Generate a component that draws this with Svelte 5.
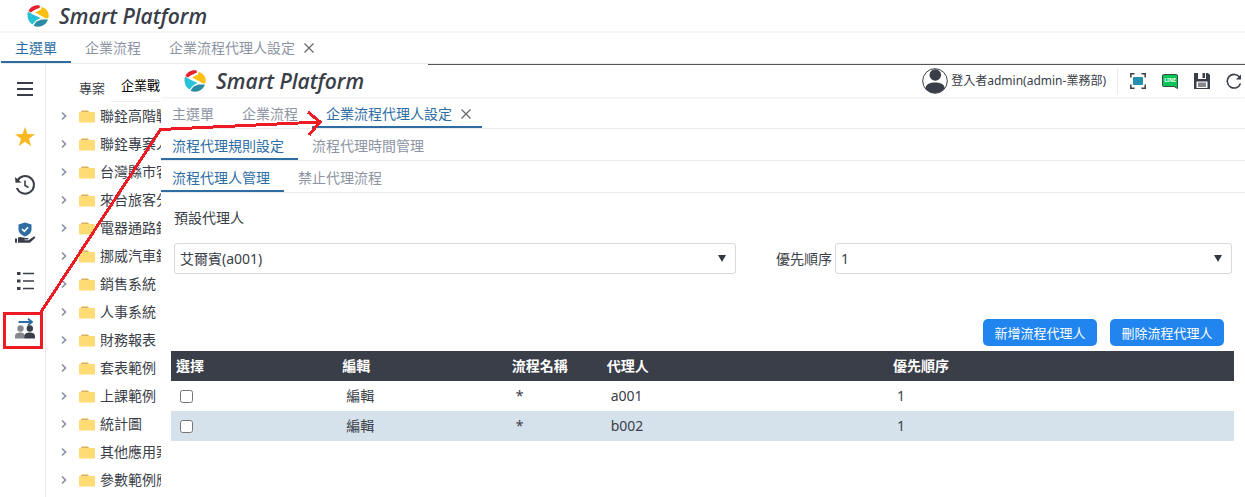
<script lang="ts">
	const tabs = ['主選單', '企業流程', '企業流程代理人設定'];
	const ruleTabs = ['流程代理規則設定', '流程代理時間管理'];
	const agentTabs = ['流程代理人管理', '禁止代理流程'];
	const folders = [
		'聯銓高階戰',
		'聯銓專案人',
		'台灣縣市客',
		'來台旅客分',
		'電器通路銷',
		'挪威汽車銷',
		'銷售系統',
		'人事系統',
		'財務報表',
		'套表範例',
		'上課範例',
		'統計圖',
		'其他應用案',
		'參數範例應'
	];

	let rows = $state([
		{ checked: false, flow: '*', agent: 'a001', order: 1 },
		{ checked: false, flow: '*', agent: 'b002', order: 1 }
	]);
	let agent = $state('a001');
	let order = $state('1');
	let mainTab = $state(0);
	let panelTab = $state(2);
	let ruleTab = $state(0);
	let agentTab = $state(0);

	function addAgent() {
		rows.push({ checked: false, flow: '*', agent, order: Number(order) });
	}

	function removeAgents() {
		rows = rows.filter((r) => !r.checked);
	}
</script>

{#snippet brand()}
	<div class="brand">
		<svg width="22" height="22" viewBox="0 0 22 22">
			<path d="M1.5 6 C3 2 8 -0.5 12.5 0.5 L13 2.5 L6.5 5.5 L4 7.5 Z" fill="#e8202c" />
			<path d="M14.5 2 C20 3 22.5 8 21.5 13 L19 13.5 L12 9.5 L8 7.5 L14 4.5 Z" fill="#fdc010" />
			<path d="M1 6.5 L6 9.500 L13.500 13 L9 15.500 L5.500 19.500 C1 17 -0.500 11 1 6.500 Z" fill="#27c2d8" />
			<path d="M6.5 20.5 L9.5 16.5 L14.5 14.5 L21 14.5 C19 20.5 12 23.5 6.5 20.5 Z" fill="#2a8ba5" />
		</svg>
		<span>Smart Platform</span>
	</div>
{/snippet}

{#snippet tabBar(items: string[], active: number, select: (i: number) => void, closable: boolean)}
	<nav class="tabs">
		{#each items as item, i}
			<button class="tab" class:active={i === active} onclick={() => select(i)}>
				{item}
				{#if closable && i === items.length - 1}
					<svg width="12" height="12" viewBox="0 0 12 12">
						<path d="M1.5 1.5 L10.5 10.5 M10.5 1.5 L1.5 10.5" stroke="#666" stroke-width="1.2" />
					</svg>
				{/if}
			</button>
		{/each}
	</nav>
{/snippet}

<div class="page">
	<header class="bar">{@render brand()}</header>
	<div class="main-tabs">
		{@render tabBar(tabs, mainTab, (i) => (mainTab = i), true)}
	</div>

	<div class="body">
		<aside class="side">
			<button aria-label="選單">
				<svg width="22" height="22" viewBox="0 0 22 22">
					<path d="M3 5 H19 M3 11 H19 M3 17 H19" stroke="#3a3e48" stroke-width="2" />
				</svg>
			</button>
			<button aria-label="最愛">
				<svg width="22" height="22" viewBox="0 0 22 22">
					<path
						d="M11 1 L13.5 8 L21 8.2 L15 12.8 L17.2 20.2 L11 15.8 L4.8 20.2 L7 12.8 L1 8.2 L8.5 8 Z"
						fill="#f8b820"
					/>
				</svg>
			</button>
			<button aria-label="歷史">
				<svg width="22" height="22" viewBox="0 0 22 22" fill="none" stroke="#3a3e48" stroke-width="2">
					<path d="M3.2 7 A8.8 8.8 0 1 1 2.9 14" />
					<path d="M11 6.5 V11.5 L14.5 13.5" stroke-width="1.6" />
					<path d="M1 3 L1.5 8.8 L7.5 8.6 Z" fill="#3a3e48" stroke="none" />
				</svg>
			</button>
			<button aria-label="權限">
				<svg width="22" height="22" viewBox="0 0 22 22">
					<path d="M11 0.5 L17.5 2.5 V7 C17.5 11 14.5 13 11 14.5 C7.5 13 4.5 11 4.5 7 V2.5 Z" fill="#2e6da4" />
					<path d="M8 7 L10.3 9.3 L14 5.2" fill="none" stroke="#fff" stroke-width="1.6" />
					<path
						d="M4 15.5 C7 14 8.5 16 14 16 C15 16.5 14.5 17.5 13.5 17.5 H10.5 V18.2 H14.5 L19.5 14.7 C21 14 21.8 15.2 21 16 L16 20.8 H4 Z"
						fill="#3a3e48"
					/>
					<path d="M1 16.5 H3 V20.8 H1 Z" fill="#3a3e48" />
				</svg>
			</button>
			<button aria-label="清單">
				<svg width="22" height="22" viewBox="0 0 22 22">
					<path d="M3 2 H6.5 V5 H3 Z M3 9.5 H6.5 V12.5 H3 Z M3 17 H6.5 V20 H3 Z" fill="#3a3e48" />
					<path d="M9 3.5 H20 M9 11 H20 M9 18.5 H20" stroke="#3a3e48" stroke-width="1.6" />
				</svg>
			</button>
			<button aria-label="代理人設定">
				<svg width="22" height="22" viewBox="0 0 22 22">
					<path d="M4.5 4 H18 M14 0.8 L18 4 L14 7.2" fill="none" stroke="#2e6da4" stroke-width="1.8" />
					<circle cx="6.5" cy="10.5" r="3.2" fill="#85888e" />
					<path d="M1 20.5 V18 C1 15.5 3.5 14.5 6.5 14.5 C9 14.5 11 16 11 18 V20.5 Z" fill="#85888e" />
					<circle cx="15.8" cy="10.5" r="3.2" fill="#3a3e48" />
					<path d="M10.5 20.5 V18 C10.5 15.5 13 14.5 16 14.5 C19 14.5 21 16 21 18 V20.5 Z" fill="#3a3e48" />
				</svg>
			</button>
		</aside>

		<section class="tree">
			<div class="tree-head">
				<span>專案</span>
				<span class="current">企業戰</span>
			</div>
			<ul>
				{#each folders as name}
					<li>
						<svg width="8" height="10" viewBox="0 0 8 10">
							<path d="M2 1.5 L5.5 5 L2 8.5" fill="none" stroke="#8a92a5" stroke-width="1.7" />
						</svg>
						<svg width="16" height="13" viewBox="0 0 16 13">
							<path d="M2 3 V1.5 Q2 0.5 3 0.5 H9 L11 3 Z" fill="#dcb35c" />
							<path d="M0 3 Q0 2 1 2 H15 Q16 2 16 3 V11 Q16 12.5 15 12.5 H1 Q0 12.5 0 11 Z" fill="#ffdb74" />
						</svg>
						<span>{name}</span>
					</li>
				{/each}
			</ul>
		</section>

		<main class="panel">
			<header class="bar">
				{@render brand()}
				<div class="tools">
					<svg width="26" height="26" viewBox="0 0 26 26">
						<defs>
							<clipPath id="avatar"><circle cx="13" cy="13" r="12" /></clipPath>
						</defs>
						<circle cx="13" cy="13" r="12.3" fill="#fff" stroke="#3a3e48" />
						<g clip-path="url(#avatar)" fill="#3a3e48">
							<circle cx="13.3" cy="7" r="5.8" />
							<path d="M3.5 26 V20 C4 16 8 14.5 13 14.5 C18 14.5 22.5 16 22.5 20 V26 Z" />
						</g>
					</svg>
					<span class="user">登入者admin(admin-業務部)</span>
					<button aria-label="全螢幕">
						<svg width="16" height="16" viewBox="0 0 16 16">
							<path
								d="M0.8 4.5 V0.8 H4.5 M11.5 0.8 H15.2 V4.5 M15.2 11.5 V15.2 H11.5 M4.5 15.2 H0.8 V11.5"
								fill="none"
								stroke="#3a3e48"
								stroke-width="1.5"
							/>
							<rect x="3" y="4" width="10" height="8" rx="1" fill="#278fae" />
						</svg>
					</button>
					<button aria-label="LINE">
						<svg width="16" height="16" viewBox="0 0 16 16">
							<path
								d="M1.5 1.5 H14.5 Q15.5 1.5 15.5 3 V15.5 L12 13.5 H1.5 Q0.5 13.5 0.5 12.5 V3 Q0.5 1.5 1.5 1.5 Z"
								fill="#06c755"
								stroke="#3a4a48"
							/>
							<text x="8" y="9" text-anchor="middle" font-size="5" font-weight="700" fill="#fff">LINE</text>
						</svg>
					</button>
					<button aria-label="儲存">
						<svg width="16" height="16" viewBox="0 0 16 16">
							<path d="M0 0 H4 V6 H12 V0 H14 L16 2 V16 H0 Z" fill="#3a3e48" />
							<path d="M8.5 0 H11 V5 H8.5 Z" fill="#3a3e48" />
							<path d="M2.5 8.5 H13.5 V15 H2.5 Z" fill="#fff" />
							<path d="M4 9.5 H12 V14 H4 Z" fill="#85888e" />
						</svg>
					</button>
					<button aria-label="重新整理">
						<svg width="16" height="16" viewBox="0 0 16 16">
							<path d="M13.8 4.5 A6.8 6.8 0 1 0 14.5 10.5" fill="none" stroke="#3a3e48" stroke-width="1.6" />
							<path d="M15 1.5 V6.5 H10 Z" fill="#3a3e48" />
						</svg>
					</button>
				</div>
			</header>

			{@render tabBar(tabs, panelTab, (i) => (panelTab = i), true)}
			{@render tabBar(ruleTabs, ruleTab, (i) => (ruleTab = i), false)}
			{@render tabBar(agentTabs, agentTab, (i) => (agentTab = i), false)}

			<form class="fields" onsubmit={(e) => e.preventDefault()}>
				<label class="title" for="agent">預設代理人</label>
				<div class="line">
					<div class="select wide">
						<select id="agent" bind:value={agent}>
							<option value="a001">艾爾賓(a001)</option>
							<option value="b002">b002</option>
						</select>
					</div>
					<label for="order">優先順序</label>
					<div class="select">
						<select id="order" bind:value={order}>
							<option>1</option>
							<option>2</option>
						</select>
					</div>
				</div>
				<div class="actions">
					<button type="button" onclick={addAgent}>新增流程代理人</button>
					<button type="button" onclick={removeAgents}>刪除流程代理人</button>
				</div>
			</form>

			<table>
				<thead>
					<tr>
						<th class="c-check">選擇</th>
						<th class="c-edit">編輯</th>
						<th class="c-flow">流程名稱</th>
						<th class="c-agent">代理人</th>
						<th>優先順序</th>
					</tr>
				</thead>
				<tbody>
					{#each rows as row}
						<tr>
							<td><input type="checkbox" aria-label="選擇 {row.agent}" bind:checked={row.checked} /></td>
							<td><a href="#edit">編輯</a></td>
							<td>{row.flow}</td>
							<td>{row.agent}</td>
							<td>{row.order}</td>
						</tr>
					{/each}
				</tbody>
			</table>
		</main>
	</div>

	<svg class="marker" width="330" height="360" viewBox="0 0 330 360">
		<rect x="4.5" y="313.5" width="37" height="34" />
		<path d="M41 312 L160.5 129.5 L320 122 M308 112 L320 122 L309 135" />
	</svg>
</div>

<style>
	:global(body) {
		margin: 0;
		background: #fff;
	}

	.page {
		position: relative;
		min-height: 100vh;
		display: flex;
		flex-direction: column;
		font-family: 'Noto Sans', 'Noto Sans CJK TC', sans-serif;
		font-size: 14px;
		line-height: 20px;
		color: #3a3e48;
	}

	button {
		padding: 0;
		border: none;
		background: none;
		font: inherit;
		color: inherit;
		cursor: pointer;
	}

	svg {
		display: block;
		flex: none;
	}

	.bar {
		height: 31px;
		display: flex;
		align-items: center;
		justify-content: space-between;
		border-bottom: 2px solid #f5f5f5;
	}

	.brand {
		display: flex;
		align-items: center;
		gap: 10px;
		padding-left: 27px;

		span {
			font-family: 'Open Sans', sans-serif;
			font-size: 21px;
			font-style: italic;
			font-weight: 600;
			white-space: nowrap;
		}
	}

	.tabs {
		height: 30px;
		display: flex;
		border-bottom: 1px solid #ebebeb;
	}

	.tab {
		flex: none;
		display: flex;
		align-items: center;
		gap: 8px;
		padding: 2px 14px 0;
		border-bottom: 2px solid transparent;
		color: #8d94a3;

		&:has(svg) {
			padding-right: 10px;
		}

		&.active {
			color: #2e6da4;
			border-color: #2e6da4;
		}
	}

	.main-tabs {
		padding-left: 1px;
	}

	.body {
		flex: 1;
		display: flex;
	}

	.side {
		flex: none;
		box-sizing: border-box;
		width: 46px;
		display: flex;
		flex-direction: column;
		align-items: center;
		gap: 26px;
		padding: 14px 0 0 4px;
		border-right: 1px solid #ebebeb;
	}

	.tree {
		flex: none;
		width: 115px;
		overflow: hidden;
		white-space: nowrap;

		ul {
			list-style: none;
			margin: 0;
			padding: 0 0 0 14px;
		}

		li {
			height: 28px;
			display: flex;
			align-items: center;

			svg + svg {
				margin: 0 5px 0 11px;
			}
		}
	}

	.tree-head {
		display: flex;
		align-items: flex-end;
		gap: 6px;
		height: 38px;
		padding-left: 33px;
		font-size: 13px;

		span {
			height: 24px;
		}

		.current {
			height: 26px;
			padding-left: 10px;
			border-bottom: 1px solid #ebebeb;
			color: #000;
		}
	}

	.panel {
		flex: 1;
		min-width: 0;
		overflow: hidden;

		.bar {
			height: 32px;
			border-top: 1px solid;
			border-image: linear-gradient(to right, #fff 268px, #555 268px) 1;
			border-bottom-width: 0;
			box-shadow: 0 1px 2px #ececec;
		}

		.brand {
			padding-left: 23px;
		}

		.tabs {
			height: 31px;
		}

		.tab {
			padding-top: 4px;
		}

		.tab:first-child {
			padding-left: 11px;
		}
	}

	.tools {
		display: flex;
		align-items: center;
		gap: 16px;
		padding-right: 3px;

		.user {
			margin: 0 -4px 0 -13px;
			padding-right: 11px;
			border-right: 1px solid #ebebeb;
			font-size: 12px;
			line-height: 26px;
			white-space: nowrap;
		}
	}

	.fields {
		padding: 15px 13px 0;

		.title {
			display: block;
		}

		.line {
			display: flex;
			align-items: center;
			margin-top: 15px;
		}

		.line label {
			margin: 0 3px 0 40px;
		}
	}

	.select {
		flex: 397;
		display: grid;
		align-items: center;

		&.wide {
			flex: 562;
		}

		&::after {
			content: '';
			grid-area: 1 / 1;
			justify-self: end;
			margin-right: 10px;
			border: 4px solid transparent;
			border-top: 7px solid #333843;
			border-bottom: none;
			pointer-events: none;
		}

		select {
			grid-area: 1 / 1;
			appearance: none;
			width: 100%;
			height: 31px;
			padding: 0 5px;
			border: 1px solid #d8d8d8;
			border-radius: 3px;
			background: #fff;
			font: inherit;
			color: inherit;
		}
	}

	.actions {
		display: flex;
		justify-content: flex-end;
		gap: 13px;
		padding: 45px 8px 5px 0;

		button {
			min-width: 114px;
			height: 27px;
			padding: 0 11px;
			border-radius: 5px;
			background: #2185f0;
			color: #fff;
			font-size: 13px;
		}
	}

	table {
		width: calc(100% - 21px);
		margin-left: 10px;
		table-layout: fixed;
		border-collapse: collapse;
		text-align: left;

		th {
			height: 30px;
			padding: 0 5px;
			background: #3a3e48;
			color: #fff;
			font-weight: 700;
		}

		td {
			height: 30px;
			padding: 0 9px;
		}

		tbody tr:nth-child(even) {
			background: #d6e2eb;
		}

		a {
			color: inherit;
			text-decoration: none;
		}

		input {
			display: block;
			width: 13px;
			height: 13px;
			margin: 0;
		}
	}

	.c-check {
		width: 14.7%;
	}

	.c-edit {
		width: 15%;
	}

	.c-flow {
		width: 8%;
	}

	.c-agent {
		width: 26%;
	}

	/* guide arrow drawn over the page */
	.marker {
		position: absolute;
		top: 0;
		left: 0;
		fill: none;
		stroke: #ed1c24;
		stroke-width: 3;
		shape-rendering: crispEdges;
		pointer-events: none;
	}
</style>
